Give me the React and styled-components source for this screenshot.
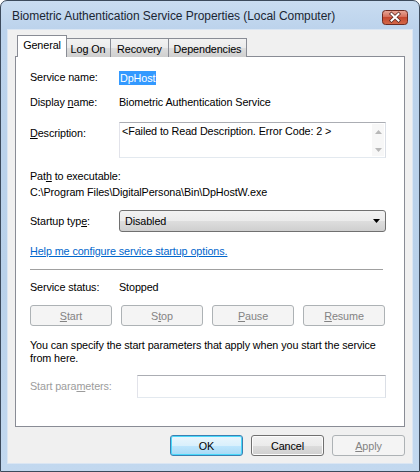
import React from 'react';
import styled, { createGlobalStyle, css } from 'styled-components';

const GlobalStyle = createGlobalStyle`
  html, body {
    margin: 0;
    padding: 0;
    background: #ffffff;
  }
  * {
    box-sizing: border-box;
  }
`;

const Window = styled.div`
  width: 420px;
  height: 472px;
  display: flex;
  flex-direction: column;
  padding: 0 7px 8px 7px;
  border: 1px solid #3c4a5c;
  border-radius: 7px 7px 0 0;
  background: linear-gradient(180deg, #c9dcf1 0px, #bcd3ec 28px, #b9d1ea 60%, #c2d8ef 100%);
  font-family: 'Liberation Sans', Arial, sans-serif;
  font-size: 10.8px;
  letter-spacing: -0.1px;
  color: #000;
`;

const TitleBar = styled.div`
  height: 29px;
  flex: none;
  display: flex;
  align-items: center;
  justify-content: space-between;
  padding: 1px 4px 0 4px;
`;

const Title = styled.span`
  font-size: 12px;
  letter-spacing: -0.05px;
  color: #1b2633;
`;

const CloseButton = styled.svg`
  display: block;
  margin-top: 3px;
`;

const Client = styled.div`
  flex: 1;
  display: flex;
  flex-direction: column;
  background: #f0f0f0;
  padding: 5px 7px 0 7px;
  box-shadow: 0 0 0 1px #dbe6f3;
`;

const TabStrip = styled.div`
  display: flex;
  align-items: flex-end;
  height: 22px;
  padding-left: 2px;
  margin-bottom: -1px;
  position: relative;
  z-index: 1;
`;

const Tab = styled.div`
  width: ${(p) => p.$w}px;
  height: 19px;
  display: flex;
  align-items: center;
  justify-content: center;
  border: 1px solid #898c95;
  border-bottom: none;
  margin-left: -1px;
  background: linear-gradient(180deg, #f2f2f2 0%, #ebebeb 50%, #dddddd 51%, #cfcfcf 100%);
  padding-top: 1px;
  ${(p) =>
    p.$active &&
    css`
      height: 22px;
      margin-left: 0;
      margin-right: -1px;
      background: #ffffff;
      padding-top: 0;
      padding-bottom: 3px;
      position: relative;
      z-index: 2;
    `}
`;

const Panel = styled.div`
  height: 371px;
  flex: none;
  border: 1px solid #898c95;
  background: #ffffff;
  padding: 13px 18px 0 14px;
  display: flex;
  flex-direction: column;
`;

const Row = styled.div`
  display: grid;
  grid-template-columns: ${(p) => p.$label || 89}px 1fr;
  align-items: ${(p) => (p.$top ? 'start' : 'center')};
  margin-top: ${(p) => p.$mt || 0}px;
  min-height: 15px;
`;

const Label = styled.span`
  line-height: 15px;
  color: ${(p) => (p.$disabled ? '#9c9c9c' : '#000')};
  padding-top: ${(p) => p.$pt || 0}px;
`;

const Value = styled.span`
  line-height: 15px;
`;

const Selected = styled.span`
  background: #3399ff;
  color: #ffffff;
  padding: 0 1px;
  line-height: 14px;
  display: inline-block;
  align-self: center;
  justify-self: start;
`;

const Key = styled.span`
  text-decoration: underline;
`;

const TextBox = styled.div`
  height: 36px;
  display: flex;
  border: 1px solid #abadb3;
  border-right-color: #dbdfe6;
  border-bottom-color: #e3e9ef;
  border-left-color: #e2e3ea;
  background: #ffffff;
`;

const TextBoxContent = styled.div`
  flex: 1;
  padding: 2px 2px;
  line-height: 13px;
`;

const ScrollTrack = styled.div`
  width: 12px;
  display: flex;
  flex-direction: column;
  justify-content: space-between;
  align-items: center;
  padding: 6px 0 4px;
  margin: 1px 1px 1px 0;
  background: #f7f7f7;
`;

const Line = styled.div`
  line-height: 16px;
  margin-top: ${(p) => p.$mt || 0}px;
`;

const Select = styled.div`
  height: 22px;
  display: flex;
  align-items: center;
  justify-content: space-between;
  padding: 0 5px 0 5px;
  border: 1px solid #707070;
  border-radius: 3px;
  background: linear-gradient(180deg, #f2f2f2 0%, #ebebeb 50%, #dddddd 51%, #cfcfcf 100%);
`;

const Link = styled.a`
  display: block;
  margin-top: 12px;
  line-height: 15px;
  color: #0066cc;
  text-decoration: underline;
  cursor: pointer;
  align-self: flex-start;
`;

const Separator = styled.div`
  margin-top: 10px;
  margin-right: 3px;
  height: 2px;
  border-top: 1px solid #a0a0a0;
  border-bottom: 1px solid #ffffff;
`;

const ButtonRow = styled.div`
  display: grid;
  grid-template-columns: repeat(4, 1fr);
  column-gap: 9px;
  margin-top: 10px;
  margin-right: 1px;
`;

const Button = styled.div`
  height: 21px;
  display: flex;
  align-items: center;
  justify-content: center;
  border-radius: 3px;
  border: 1px solid ${(p) => (p.$default ? '#3c7fb1' : p.$disabled ? '#adb2b5' : '#707070')};
  color: ${(p) => (p.$disabled ? '#838383' : '#000')};
  background: ${(p) =>
    p.$disabled
      ? '#f4f4f4'
      : p.$default
      ? 'linear-gradient(180deg, #eaf6fd 0%, #d9f0fc 50%, #bee6fd 51%, #a7d9f5 100%)'
      : 'linear-gradient(180deg, #f2f2f2 0%, #ebebeb 50%, #dddddd 51%, #cfcfcf 100%)'};
  box-shadow: ${(p) => (p.$default ? 'inset 0 0 0 1px #48d8fb' : p.$disabled ? 'none' : 'inset 0 0 0 1px #fcfcfc')};
  width: ${(p) => (p.$w ? `${p.$w}px` : 'auto')};
`;

const Paragraph = styled.p`
  margin: 13px 0 0 0;
  line-height: 13px;
  white-space: nowrap;
`;

const Input = styled.div`
  height: 23px;
  border: 1px solid #abadb3;
  border-right-color: #dbdfe6;
  border-bottom-color: #e3e9ef;
  border-left-color: #e2e3ea;
  background: #ffffff;
`;

const Footer = styled.div`
  display: flex;
  justify-content: flex-end;
  gap: 8px;
  padding-top: 8px;
`;

const Arrow = ({ up, color }) => (
  <svg width="7" height="4" viewBox="0 0 7 4">
    <path d={up ? 'M0 4 L3.5 0 L7 4 Z' : 'M0 0 L7 0 L3.5 4 Z'} fill={color} />
  </svg>
);

const tabs = [
  { name: 'General', w: 50, active: true },
  { name: 'Log On', w: 46 },
  { name: 'Recovery', w: 59 },
  { name: 'Dependencies', w: 79 },
];

const App = () => {
  return (
    <>
      <GlobalStyle />
      <Window>
        <TitleBar>
          <Title>Biometric Authentication Service Properties (Local Computer)</Title>
          <CloseButton width="26" height="15" viewBox="0 0 26 15">
            <defs>
              <linearGradient id="cb" x1="0" y1="0" x2="0" y2="1">
                <stop offset="0" stopColor="#e9a99a" />
                <stop offset="0.45" stopColor="#d6705c" />
                <stop offset="0.5" stopColor="#c5482f" />
                <stop offset="1" stopColor="#d46a4a" />
              </linearGradient>
            </defs>
            <rect x="0.5" y="0.5" width="25" height="14" rx="3" fill="url(#cb)" stroke="#6d2a21" />
            <path d="M9.5 4 L16.5 10.5 M16.5 4 L9.5 10.5" stroke="#5a2a24" strokeWidth="3.6" strokeLinecap="square" />
            <path d="M9.5 4 L16.5 10.5 M16.5 4 L9.5 10.5" stroke="#ffffff" strokeWidth="2" strokeLinecap="square" />
          </CloseButton>
        </TitleBar>
        <Client>
          <TabStrip>
            {tabs.map((t) => (
              <Tab key={t.name} $w={t.w} $active={t.active}>
                {t.name}
              </Tab>
            ))}
          </TabStrip>
          <Panel>
            <Row>
              <Label>Service name:</Label>
              <Selected>DpHost</Selected>
            </Row>
            <Row $mt={10}>
              <Label>
                Display <Key>n</Key>ame:
              </Label>
              <Value>Biometric Authentication Service</Value>
            </Row>
            <Row $mt={12} $top>
              <Label $pt={4}>
                <Key>D</Key>escription:
              </Label>
              <TextBox>
                <TextBoxContent>&lt;Failed to Read Description. Error Code: 2 &gt;</TextBoxContent>
                <ScrollTrack>
                  <Arrow up color="#b8b8b8" />
                  <Arrow color="#b8b8b8" />
                </ScrollTrack>
              </TextBox>
            </Row>
            <Line $mt={10}>
              Pat<Key>h</Key> to executable:
            </Line>
            <Line>C:\Program Files\DigitalPersona\Bin\DpHostW.exe</Line>
            <Row $mt={10}>
              <Label>
                Startup typ<Key>e</Key>:
              </Label>
              <Select>
                <span>Disabled</span>
                <Arrow color="#000000" />
              </Select>
            </Row>
            <Link>Help me configure service startup options.</Link>
            <Separator />
            <Row $mt={9}>
              <Label>Service status:</Label>
              <Value>Stopped</Value>
            </Row>
            <ButtonRow>
              <Button $disabled>
                <span>
                  <Key>S</Key>tart
                </span>
              </Button>
              <Button $disabled>
                <span>
                  S<Key>t</Key>op
                </span>
              </Button>
              <Button $disabled>
                <span>
                  <Key>P</Key>ause
                </span>
              </Button>
              <Button $disabled>
                <span>
                  <Key>R</Key>esume
                </span>
              </Button>
            </ButtonRow>
            <Paragraph>
              You can specify the start parameters that apply when you start the service
              <br />
              from here.
            </Paragraph>
            <Row $mt={10} $label={107}>
              <Label $disabled>
                Start para<Key>m</Key>eters:
              </Label>
              <Input />
            </Row>
          </Panel>
          <Footer>
            <Button $default $w={73}>OK</Button>
            <Button $w={73}>Cancel</Button>
            <Button $disabled $w={73}>
              <span>
                <Key>A</Key>pply
              </span>
            </Button>
          </Footer>
        </Client>
      </Window>
    </>
  );
};

export default App;
